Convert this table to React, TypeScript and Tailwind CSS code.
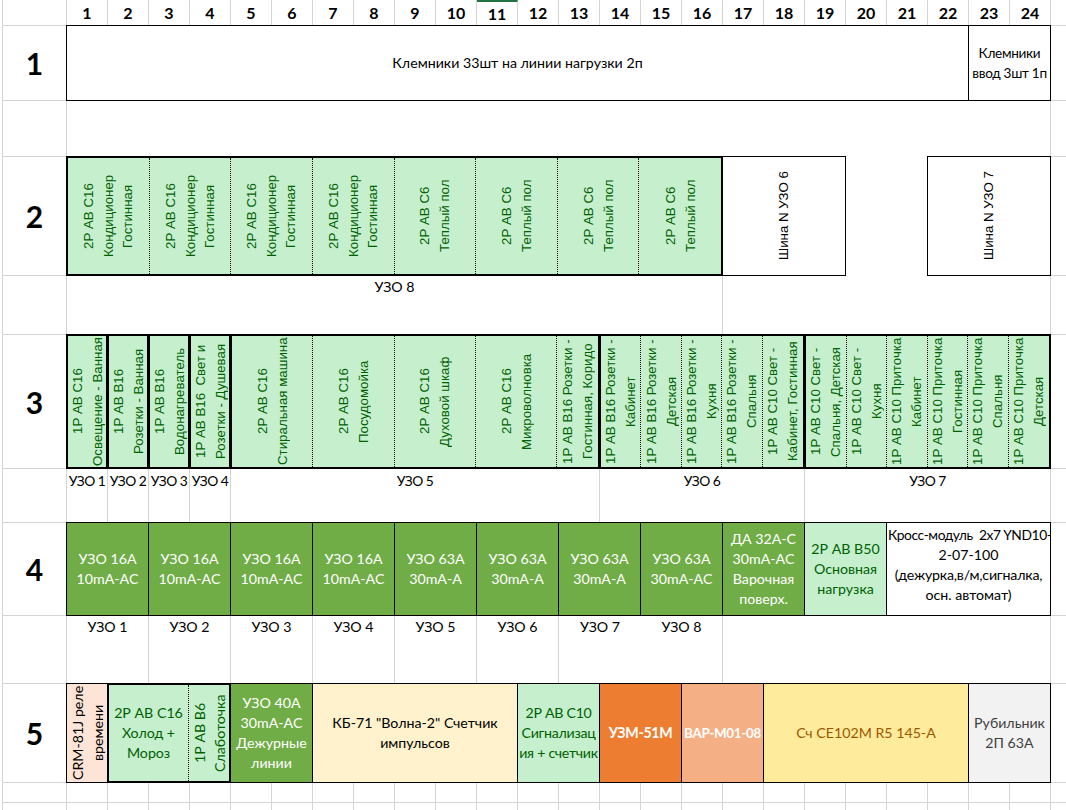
import React from 'react';

const GL = 'border-[#d4d4d4]';
const GOOD = 'bg-[#c6efce] text-[#006100]';
const GREEN = 'bg-[#70ad47] text-white';
const BOX = '-ml-px -mt-px border border-black';
const THICK = '-ml-px -mt-px border-2 border-black';
const ARIAL = "[font-family:'Liberation_Sans',Arial,sans-serif] text-[13.3px] leading-[19.5px]";

const rowCls = [
  'row-start-1', 'row-start-2', 'row-start-3', 'row-start-4', 'row-start-5', 'row-start-6',
  'row-start-7', 'row-start-8', 'row-start-9', 'row-start-10', 'row-start-11', 'row-start-12',
];
const rowLabels: Record<number, string> = { 1: '1', 3: '2', 5: '3', 7: '4', 9: '5' };

// rotated text, reads bottom to top
function V({ lines, cls = '' }: { lines: string[]; cls?: string }) {
  return (
    <div className={`flex h-full w-full items-center justify-center overflow-hidden ${cls}`}>
      <div className="h-full rotate-180 text-center [writing-mode:vertical-rl]">
        {lines.map((l, i) => (
          <div key={i} className="whitespace-pre">
            {l}
          </div>
        ))}
      </div>
    </div>
  );
}

function H({ lines, cls = '' }: { lines: string[]; cls?: string }) {
  return (
    <div className={`flex h-full w-full flex-col items-center justify-center overflow-hidden text-center ${cls}`}>
      {lines.map((l, i) => (
        <div key={i} className="whitespace-pre">
          {l}
        </div>
      ))}
    </div>
  );
}

const row2 = [
  ['2Р АВ С16', 'Кондиционер', 'Гостинная'],
  ['2Р АВ С16', 'Кондиционер', 'Гостинная'],
  ['2Р АВ С16', 'Кондиционер', 'Гостинная'],
  ['2Р АВ С16', 'Кондиционер', 'Гостинная'],
  ['2Р АВ С6', 'Теплый пол'],
  ['2Р АВ С6', 'Теплый пол'],
  ['2Р АВ С6', 'Теплый пол'],
  ['2Р АВ С6', 'Теплый пол'],
];

const row3single = [
  { cls: 'col-start-2 col-end-3', lines: ['1Р АВ С16', 'Освещение - Ванная'] },
  { cls: 'col-start-3 col-end-4', lines: ['1Р АВ В16', 'Розетки - Ванная'] },
  { cls: 'col-start-4 col-end-5', lines: ['1Р АВ В16', 'Водонагреватель'] },
  { cls: 'col-start-5 col-end-6', lines: ['1Р АВ В16  Свет и', 'Розетки - Душевая'] },
];

const row3a = [
  { span: 'col-span-2', lines: ['2Р АВ С16', 'Стиральная машина'] },
  { span: 'col-span-2', lines: ['2Р АВ С16', 'Посудомойка'] },
  { span: 'col-span-2', lines: ['2Р АВ С16', 'Духовой шкаф'] },
  { span: 'col-span-2', lines: ['2Р АВ С16', 'Микроволновка'] },
  { span: 'col-span-1', lines: ['1Р АВ В16 Розетки -', 'Гостинная, Коридо'] },
];

const row3b = [
  ['1Р АВ В16 Розетки -', 'Кабинет'],
  ['1Р АВ В16 Розетки -', 'Детская'],
  ['1Р АВ В16 Розетки -', 'Кухня'],
  ['1Р АВ В16 Розетки -', 'Спальня'],
  ['1Р АВ С10 Свет -', 'Кабинет, Гостинная'],
];

const row3c = [
  ['1Р АВ С10 Свет -', 'Спальня, Детская'],
  ['1Р АВ С10 Свет -', 'Кухня'],
  ['1Р АВ С10 Приточка', 'Кабинет'],
  ['1Р АВ С10 Приточка', 'Гостинная'],
  ['1Р АВ С10 Приточка', 'Спальня'],
  ['1Р АВ С10 Приточка', 'Детская'],
];

const labels3 = [
  { cls: 'col-start-2 col-end-3', text: 'УЗО 1' },
  { cls: 'col-start-3 col-end-4', text: 'УЗО 2' },
  { cls: 'col-start-4 col-end-5', text: 'УЗО 3' },
  { cls: 'col-start-5 col-end-6', text: 'УЗО 4' },
  { cls: 'col-start-6 col-end-15', text: 'УЗО 5' },
  { cls: 'col-start-15 col-end-20', text: 'УЗО 6' },
  { cls: 'col-start-20 col-end-26', text: 'УЗО 7' },
];

const row4 = [
  { cls: `col-start-2 col-end-4 ${GREEN}`, lines: ['УЗО 16А', '10mA-AC'] },
  { cls: `col-start-4 col-end-6 ${GREEN}`, lines: ['УЗО 16А', '10mA-AC'] },
  { cls: `col-start-6 col-end-8 ${GREEN}`, lines: ['УЗО 16А', '10mA-AC'] },
  { cls: `col-start-8 col-end-10 ${GREEN}`, lines: ['УЗО 16А', '10mA-AC'] },
  { cls: `col-start-10 col-end-12 ${GREEN}`, lines: ['УЗО 63А', '30mA-A'] },
  { cls: `col-start-12 col-end-14 ${GREEN}`, lines: ['УЗО 63А', '30mA-A'] },
  { cls: `col-start-14 col-end-16 ${GREEN}`, lines: ['УЗО 63А', '30mA-A'] },
  { cls: `col-start-16 col-end-18 ${GREEN}`, lines: ['УЗО 63А', '30mA-AC'] },
  { cls: `col-start-18 col-end-20 ${GREEN}`, lines: ['ДА 32А-С', '30mA-AC', 'Варочная', 'поверх.'] },
  { cls: `col-start-20 col-end-22 ${GOOD}`, lines: ['2Р АВ В50', 'Основная', 'нагрузка'] },
];

const labels4 = [
  { cls: 'col-start-2 col-end-4 border-r', text: 'УЗО 1' },
  { cls: 'col-start-4 col-end-6 border-r', text: 'УЗО 2' },
  { cls: 'col-start-6 col-end-8 border-r', text: 'УЗО 3' },
  { cls: 'col-start-8 col-end-10 border-r', text: 'УЗО 4' },
  { cls: 'col-start-10 col-end-12 border-r', text: 'УЗО 5' },
  { cls: 'col-start-12 col-end-14 border-r', text: 'УЗО 6' },
  { cls: 'col-start-14 col-end-16', text: 'УЗО 7' },
  { cls: 'col-start-16 col-end-18 border-r', text: 'УЗО 8' },
  { cls: 'col-start-18 col-end-26 border-r', text: '' },
];

const cols = Array.from({ length: 24 }, (_, i) => i + 1);

export default function App() {
  return (
    <div className="h-[810px] w-[1066px] overflow-hidden bg-white text-[14.2px] leading-5 text-black [font-family:Lato,'Open_Sans',sans-serif]">
      <div className="grid grid-cols-[67px_repeat(24,41px)_15px] grid-rows-[26px_75px_56px_119px_59px_134px_54px_93px_68px_99px_20px_30px]">
        {/* row headers */}
        {rowCls.map((r, i) => (
          <div
            key={`l${i}`}
            className={`col-start-1 ${r} ml-[2px] flex items-center justify-center border-r border-b border-l ${GL} text-[30px] font-bold`}
          >
            {rowLabels[i] ?? ''}
          </div>
        ))}
        {rowCls.map((r, i) => (
          <div key={`r${i}`} className={`col-start-26 ${r} -ml-px border-b border-l ${GL}`} />
        ))}

        {/* column numbers */}
        {cols.map((c) => (
          <div
            key={`h${c}`}
            className={`row-start-1 flex items-center justify-center border-r ${GL} text-[16px] font-bold ${
              c === 11 ? 'border-t-[2px] border-t-[#217346]' : ''
            }`}
          >
            {c}
          </div>
        ))}

        {/* empty grid below row 5 */}
        {cols.map((c) => (
          <div key={`a${c}`} className={`row-start-11 border-r border-b ${GL}`} />
        ))}
        {cols.map((c) => (
          <div key={`b${c}`} className={`row-start-12 border-r border-b ${GL}`} />
        ))}

        {/* row 1 */}
        <div className={`col-start-2 col-end-24 row-start-2 ${BOX}`}>
          <H lines={['Клемники 33шт на линии нагрузки 2п']} />
        </div>
        <div className={`col-start-24 col-end-26 row-start-2 ${BOX}`}>
          <H lines={['Клемники', 'ввод 3шт 1п']} cls="text-[13.6px] tracking-[-0.3px]" />
        </div>

        {/* row 2 */}
        <div className={`col-start-2 col-end-18 row-start-4 grid grid-cols-8 grid-rows-1 ${THICK} ${GOOD} ${ARIAL}`}>
          {row2.map((lines, i) => (
            <div key={i} className={`min-h-0 ${i < 7 ? 'border-r border-dotted border-black' : ''}`}>
              <V lines={lines} />
            </div>
          ))}
        </div>
        <div className={`col-start-18 col-end-21 row-start-4 ${BOX} ${ARIAL}`}>
          <V lines={['Шина N УЗО 6']} />
        </div>
        <div className={`col-start-23 col-end-26 row-start-4 ${BOX} ${ARIAL}`}>
          <V lines={['Шина N УЗО 7']} />
        </div>

        {/* label under row 2 */}
        <div className={`col-start-2 col-end-18 row-start-5 border-r ${GL} pt-px text-center`}>УЗО 8</div>
        <div className={`col-start-18 col-end-26 row-start-5 border-r ${GL}`} />

        {/* row 3 */}
        {row3single.map((c, i) => (
          <div key={i} className={`${c.cls} row-start-6 ${THICK} ${GOOD} ${ARIAL}`}>
            <V lines={c.lines} />
          </div>
        ))}
        <div className={`col-start-6 col-end-15 row-start-6 grid grid-cols-9 grid-rows-1 ${THICK} ${GOOD} ${ARIAL}`}>
          {row3a.map((c, i) => (
            <div key={i} className={`min-h-0 ${c.span} ${i < 4 ? 'border-r border-dotted border-black' : ''}`}>
              <V lines={c.lines} />
            </div>
          ))}
        </div>
        <div className={`col-start-15 col-end-20 row-start-6 grid grid-cols-5 grid-rows-1 ${THICK} ${GOOD} ${ARIAL}`}>
          {row3b.map((lines, i) => (
            <div key={i} className={`min-h-0 ${i < 4 ? 'border-r border-dotted border-black' : ''}`}>
              <V lines={lines} />
            </div>
          ))}
        </div>
        <div className={`col-start-20 col-end-26 row-start-6 grid grid-cols-6 grid-rows-1 ${THICK} ${GOOD} ${ARIAL}`}>
          {row3c.map((lines, i) => (
            <div key={i} className={`min-h-0 ${i < 5 ? 'border-r border-dotted border-black' : ''}`}>
              <V lines={lines} />
            </div>
          ))}
        </div>

        {/* labels under row 3 */}
        {labels3.map((l, i) => (
          <div
            key={i}
            className={`${l.cls} row-start-7 border-r ${GL} pt-0.5 text-center text-[13.8px] whitespace-nowrap tracking-[-0.5px]`}
          >
            {l.text}
          </div>
        ))}

        {/* row 4 */}
        {row4.map((c, i) => (
          <div key={i} className={`${c.cls} row-start-8 ${BOX}`}>
            <H lines={c.lines} />
          </div>
        ))}
        <div className={`col-start-22 col-end-26 row-start-8 ${BOX}`}>
          <div className="flex h-full flex-col items-center overflow-hidden pt-[2px] text-center">
            <div className="self-start pl-px text-[13.8px] whitespace-pre tracking-[-0.4px]">Кросс-модуль  2x7 YND10-</div>
            <div>2-07-100</div>
            <div className="whitespace-pre tracking-[-0.2px]">(дежурка,в/м,сигналка,</div>
            <div>осн. автомат)</div>
          </div>
        </div>

        {/* labels under row 4 */}
        {labels4.map((l, i) => (
          <div key={i} className={`${l.cls} row-start-9 ${GL} pt-px text-center`}>
            {l.text}
          </div>
        ))}

        {/* row 5 */}
        <div className={`col-start-2 col-end-3 row-start-10 ${BOX} bg-[#fce4d6] leading-[19.5px]`}>
          <V lines={['CRM-81J реле', 'времени']} />
        </div>
        <div className={`col-start-3 col-end-6 row-start-10 grid grid-cols-3 grid-rows-1 ${THICK} ${GOOD}`}>
          <div className="col-span-2 min-h-0 border-r border-dotted border-black">
            <H lines={['2Р АВ С16', 'Холод +', 'Мороз']} />
          </div>
          <div className="min-h-0 leading-[19.5px]">
            <V lines={['1Р АВ В6', 'Слаботочка']} />
          </div>
        </div>
        <div className={`col-start-6 col-end-8 row-start-10 ${BOX} ${GREEN}`}>
          <H lines={['УЗО 40А', '30mA-AC', 'Дежурные', 'линии']} />
        </div>
        <div className={`col-start-8 col-end-13 row-start-10 ${BOX} bg-[#fff2cc]`}>
          <H lines={['КБ-71 "Волна-2" Счетчик', 'импульсов']} />
        </div>
        <div className={`col-start-13 col-end-15 row-start-10 ${BOX} ${GOOD}`}>
          <H lines={['2Р АВ С10', 'Сигнализац', 'ия + счетчик']} cls="tracking-[-0.3px]" />
        </div>
        <div className={`col-start-15 col-end-17 row-start-10 ${BOX} bg-[#ed7d31] font-bold text-white`}>
          <H lines={['УЗМ-51М']} cls="tracking-[-0.3px]" />
        </div>
        <div className={`col-start-17 col-end-19 row-start-10 ${BOX} bg-[#f4b084] font-bold text-white`}>
          <H lines={['ВАР-М01-08']} cls="text-[13.4px] tracking-[-0.3px]" />
        </div>
        <div className={`col-start-19 col-end-24 row-start-10 ${BOX} bg-[#ffeb9c] text-[#9c5700]`}>
          <H lines={['Сч СЕ102М R5 145-А']} />
        </div>
        <div className={`col-start-24 col-end-26 row-start-10 ${BOX} bg-[#f2f2f2] text-[#3f3f3f]`}>
          <H lines={['Рубильник', '2П 63А']} />
        </div>
      </div>
    </div>
  );
}
